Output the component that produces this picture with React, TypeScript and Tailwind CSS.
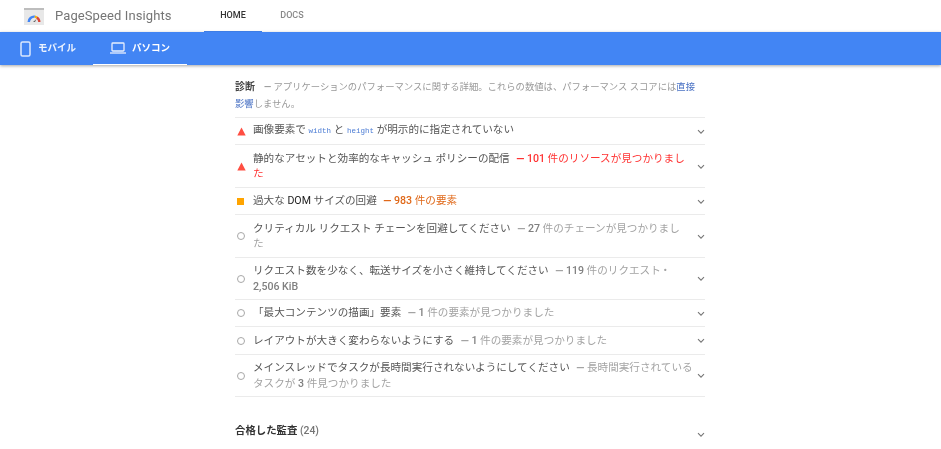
const font = { fontFamily: 'Roboto, "Noto Sans CJK JP", sans-serif' };
const mono = { fontFamily: '"Liberation Mono", monospace' };

function Chevron() {
  return (
    <svg width="8" height="6" viewBox="0 0 8 6" className="shrink-0" fill="none" stroke="#777" strokeWidth="1.1">
      <path d="M1 1.2 L4 4.2 L7 1.2" />
    </svg>
  );
}

function Tri() {
  return <svg width="9" height="9" viewBox="0 0 9 9"><path d="M4.5 0.5 L8.7 8.5 L0.3 8.5 Z" fill="#ff4e42" /></svg>;
}
function Sq() {
  return <div className="w-[7px] h-[7px] bg-[#ffa400]" />;
}
function Circle() {
  return <div className="w-[8px] h-[8px] rounded-full border border-[#a8a8a8]" />;
}

type R = { icon: React.ReactNode; title: React.ReactNode; sub?: React.ReactNode; color?: string; h: string };

function Row({ icon, title, sub, color, h }: R) {
  return (
    <div className={`flex items-center border-b border-[#ebebeb] ${h}`}>
      <div className="w-[18px] flex items-center justify-start pl-[2px] shrink-0">{icon}</div>
      <div className="w-[441px] shrink-0 text-[10.6px] leading-[15.5px] text-[#555]">
        {title}
        {sub && <span className={`ml-[6.5px] ${color}`}>{sub}</span>}
      </div>
      <div className="flex-1 flex justify-end shrink-0 mt-[1px]"><Chevron /></div>
    </div>
  );
}

function Dash() {
  return <b className="font-bold">―</b>;
}
function Num({ children }: { children: React.ReactNode }) {
  return <b className="font-medium text-[#808080]">{children}</b>;
}

export default function App() {
  const gray = 'text-[#a3a3a3]';
  return (
    <div style={font} className="w-[941px] h-[449px] overflow-hidden bg-white flex flex-col blur-[0.5px]">
      <header className="h-[32px] shrink-0 flex items-center bg-white">
        <svg width="20" height="17" viewBox="0 0 20 17" className="ml-[24px] shrink-0">
          <rect width="20" height="17" fill="#e8e8e8" />
          <rect width="20" height="2" fill="#bdbdbd" />
          <path d="M3.5 14 A6.5 6.5 0 0 1 11 7.6 L10.6 9.8 A4.3 4.3 0 0 0 6 14 Z" fill="#4285f4" />
          <path d="M11 7.6 A6.5 6.5 0 0 1 13.4 8.6 L12.2 10.4 A4.3 4.3 0 0 0 10.6 9.8 Z" fill="#f4b400" />
          <path d="M13.4 8.6 A6.5 6.5 0 0 1 16.5 14 L14.2 14 A4.3 4.3 0 0 0 12.2 10.4 Z" fill="#db4437" />
          <path d="M9 14 L12.5 11 L11 14 Z" fill="#666" />
        </svg>
        <div className="ml-[11px] text-[13px] text-[#757575] w-[149px] tracking-[0.1px]">PageSpeed Insights</div>
        <div className="w-[58px] h-full flex items-center justify-center text-[9px] font-medium text-[#333] border-b border-[#4285f4]">HOME</div>
        <div className="w-[60px] h-full flex items-center justify-center text-[9px] font-medium text-[#888]">DOCS</div>
      </header>
      <nav className="h-[33px] shrink-0 bg-[#4285f4] flex shadow-[0_1px_3px_rgba(0,0,0,0.35)] relative z-10">
        <div className="w-[93px] flex items-center pl-[20px] text-white/90 text-[9.5px] font-bold">
          <svg width="11" height="16" viewBox="0 0 11 16" fill="none" stroke="#dbe7fd" strokeWidth="1.5" className="mr-[7px]"><rect x="1" y="1" width="9" height="14" rx="1.5" /></svg>
          モバイル
        </div>
        <div className="w-[94px] flex items-center pl-[17px] text-white text-[9.5px] font-bold border-b border-white">
          <svg width="16" height="12" viewBox="0 0 16 12" fill="none" stroke="#e8effd" strokeWidth="1.3" className="mr-[6px]"><rect x="2" y="1" width="12" height="8" rx="0.8" /><path d="M0 11 H16" /></svg>
          パソコン
        </div>
      </nav>
      <main className="w-[470px] ml-[235px] flex flex-col">
        <div className="pt-[13px] text-[9.33px] leading-[17px] text-[#999] border-b border-[#ebebeb] h-[53px]">
          <span className="font-bold text-[10px] text-[#444] mr-[9px]">診断</span>
          <Dash /> アプリケーションのパフォーマンスに関する詳細。これらの数値は、パフォーマンス スコアには<span className="text-[#4a72c4]">直接<br />影響</span>しません。
        </div>
        <Row h="h-[27px]" icon={<Tri />} title={<>画像要素で <code className="text-[7.5px] text-[#4a7bd4]" style={mono}>width</code> と <code className="text-[7.5px] text-[#4a7bd4]" style={mono}>height</code> が明示的に指定されていない</>} />
        <Row h="h-[43px]" icon={<Tri />} title="静的なアセットと効率的なキャッシュ ポリシーの配信" color="text-[#f33]" sub={<><Dash /> <b className="font-medium">101</b> 件のリソースが見つかりました</>} />
        <Row h="h-[27px]" icon={<Sq />} title={<>過大な <span className="text-[#222]">DOM</span> サイズの回避</>} color="text-[#e0691a]" sub={<><Dash /> <b className="font-medium">983</b> 件の要素</>} />
        <Row h="h-[43px]" icon={<Circle />} title="クリティカル リクエスト チェーンを回避してください" color={gray} sub={<><Dash /> <Num>27</Num> 件のチェーンが見つかりまし<br />た</>} />
        <Row h="h-[42px]" icon={<Circle />} title="リクエスト数を少なく、転送サイズを小さく維持してください" color={gray} sub={<><Dash /> <Num>119</Num> 件のリクエスト • <Num>2,506 KiB</Num></>} />
        <Row h="h-[27px]" icon={<Circle />} title="「最大コンテンツの描画」要素" color={gray} sub={<><Dash /> <Num>1</Num> 件の要素が見つかりました</>} />
        <Row h="h-[28px]" icon={<Circle />} title="レイアウトが大きく変わらないようにする" color={gray} sub={<><Dash /> <Num>1</Num> 件の要素が見つかりました</>} />
        <Row h="h-[42px]" icon={<Circle />} title="メインスレッドでタスクが長時間実行されないようにしてください" color={gray} sub={<><Dash /> 長時間実行されているタスクが <Num>3</Num> 件見つかりました</>} />
        <div className="flex items-center justify-between mt-[26px] h-[16px] text-[10.4px]">
          <div><span className="font-bold text-[#333]">合格した監査</span> <span className="text-[#757575] font-medium">(24)</span></div>
          <div className="mt-[7px]"><Chevron /></div>
        </div>
      </main>
    </div>
  );
}
